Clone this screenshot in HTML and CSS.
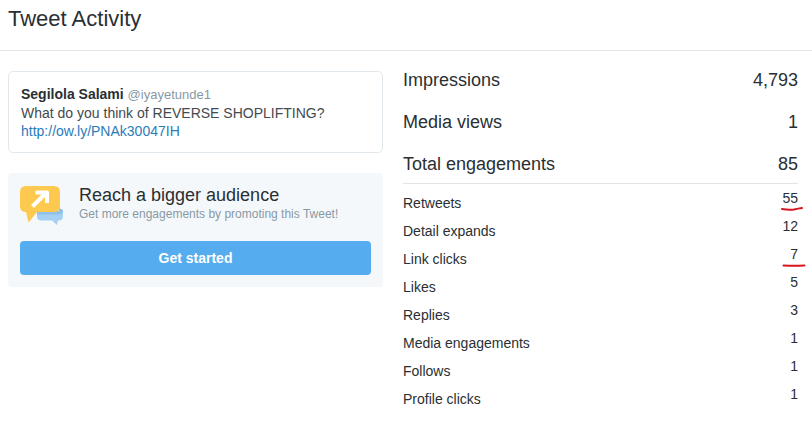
FILE: index.html
```html
<!DOCTYPE html>
<html lang="en">
<head>
  <meta charset="UTF-8">
  <meta name="viewport" content="width=device-width, initial-scale=1">
  <title>Tweet Activity</title>
  <link rel="stylesheet" href="styles.css">
</head>
<body>

  <header class="page-header">
    <h1>Tweet Activity</h1>
  </header>

  <main class="activity">
    <div class="side">
      <article class="tweet">
        <div class="author"><strong>Segilola Salami</strong> <span class="handle">@iyayetunde1</span></div>
        <p>What do you think of REVERSE SHOPLIFTING?<br><a href="#">http://ow.ly/PNAk30047IH</a></p>
      </article>

      <section class="promo">
        <div class="promo-head">
          <svg class="promo-icon" width="44" height="41" viewBox="0 0 44 41" aria-hidden="true">
            <path fill="#a5d0f3" d="M17 26H39V23.500Q43 24 43 27V31Q43 35.500 39 35.500H38L37 40L32 35.500H21Q17 35.500 17 31Z"/>
            <path fill="#8ec0ea" d="M17 26H39V23.500Q43 24 43 26Q42 29.500 38 29.500H17Z"/>
            <path fill="#fdc94f" d="M6 1H34Q40 1 40 7V21Q40 27 34 27H17L8.500 37.500L6 27Q0 27 0 21V7Q0 1 6 1Z"/>
            <path fill="none" stroke="#fff" stroke-width="4" d="M12.500 21.500L26 8"/>
            <path fill="none" stroke="#fff" stroke-width="4" stroke-linejoin="round" d="M15.500 7.500H27V18"/>
          </svg>
          <div>
            <h2>Reach a bigger audience</h2>
            <p>Get more engagements by promoting this Tweet!</p>
          </div>
        </div>
        <button type="button">Get started</button>
      </section>
    </div>

    <div class="stats">
      <table class="totals">
        <tr><th scope="row">Impressions</th><td>4,793</td></tr>
        <tr><th scope="row">Media views</th><td>1</td></tr>
        <tr><th scope="row">Total engagements</th><td>85</td></tr>
      </table>

      <table class="details">
        <tr>
          <th scope="row">Retweets</th>
          <td><span class="marked">55<svg class="mark" width="24" height="6" viewBox="0 0 24 6" aria-hidden="true"><path d="M2 3Q8 4 14 3.500Q18 2.500 22 2"/></svg></span></td>
        </tr>
        <tr><th scope="row">Detail expands</th><td>12</td></tr>
        <tr>
          <th scope="row">Link clicks</th>
          <td><span class="marked">7<svg class="mark mark-wide" width="24" height="6" viewBox="0 0 24 6" aria-hidden="true"><path d="M1.500 3.500Q12 4 22.500 3.500"/></svg></span></td>
        </tr>
        <tr><th scope="row">Likes</th><td>5</td></tr>
        <tr><th scope="row">Replies</th><td>3</td></tr>
        <tr><th scope="row">Media engagements</th><td>1</td></tr>
        <tr><th scope="row">Follows</th><td>1</td></tr>
        <tr><th scope="row">Profile clicks</th><td>1</td></tr>
      </table>
    </div>
  </main>

</body>
</html>
```

FILE: styles.css
```css
* {
  box-sizing: border-box;
}

body {
  margin: 0;
  background: #fff;
  color: #292f33;
  font-family: "Liberation Sans", Arial, sans-serif;
  font-size: 14px;
  line-height: 18px;
}

h1,
h2,
p {
  margin: 0;
  font-weight: normal;
}

.page-header {
  padding: 7px 8px 19px;
  border-bottom: 1px solid #e1e5e8;
}

.page-header h1 {
  font-size: 22px;
  line-height: 24px;
}

.activity {
  display: grid;
  grid-template-columns: 375fr 395fr;
  gap: 20px;
  padding: 8px 14px 8px 8px;
}

.side {
  display: flex;
  flex-direction: column;
  gap: 20px;
  padding-top: 12px;
}

/* tweet */
.tweet {
  padding: 13px 12px 12px;
  border: 1px solid #e1e8ed;
  border-radius: 5px;
}

.handle {
  color: #8899a6;
  font-size: 13px;
}

.tweet p {
  color: #444a4e;
}

.tweet a {
  color: #2b7bb9;
  text-decoration: none;
}

/* promote box */
.promo {
  padding: 12px;
  background: #f5f8fa;
  border-radius: 4px;
}

.promo-head {
  display: flex;
  gap: 15px;
  margin-bottom: 15px;
}

.promo-icon {
  flex: none;
}

.promo h2 {
  font-size: 18px;
  line-height: 20px;
}

.promo p {
  color: #8899a6;
  font-size: 12px;
}

.promo button {
  display: block;
  width: 100%;
  padding: 8px;
  border: none;
  border-radius: 4px;
  background: #55acee;
  color: #fff;
  font: bold 14px/18px "Liberation Sans", Arial, sans-serif;
  cursor: pointer;
}

/* numbers */
table {
  width: 100%;
  border-spacing: 0;
}

th {
  font-weight: normal;
  text-align: left;
}

td {
  text-align: right;
}

.totals th,
.totals td {
  padding: 11px 0;
  font-size: 18px;
  line-height: 20px;
}

.totals tr:last-child th,
.totals tr:last-child td {
  padding-bottom: 9px;
  border-bottom: 1px solid #e1e5e8;
}

.details {
  margin-top: 5px;
}

.details th,
.details td {
  padding: 6px 0;
  line-height: 16px;
}

.details td {
  padding: 1px 0 11px;
}

.marked {
  position: relative;
}

/* red pen line under a number */
.mark {
  position: absolute;
  top: 16px;
  right: -6px;
  fill: none;
  stroke: #d8161f;
  stroke-width: 2;
  stroke-linecap: round;
}

.mark-wide {
  right: -8px;
}
```
